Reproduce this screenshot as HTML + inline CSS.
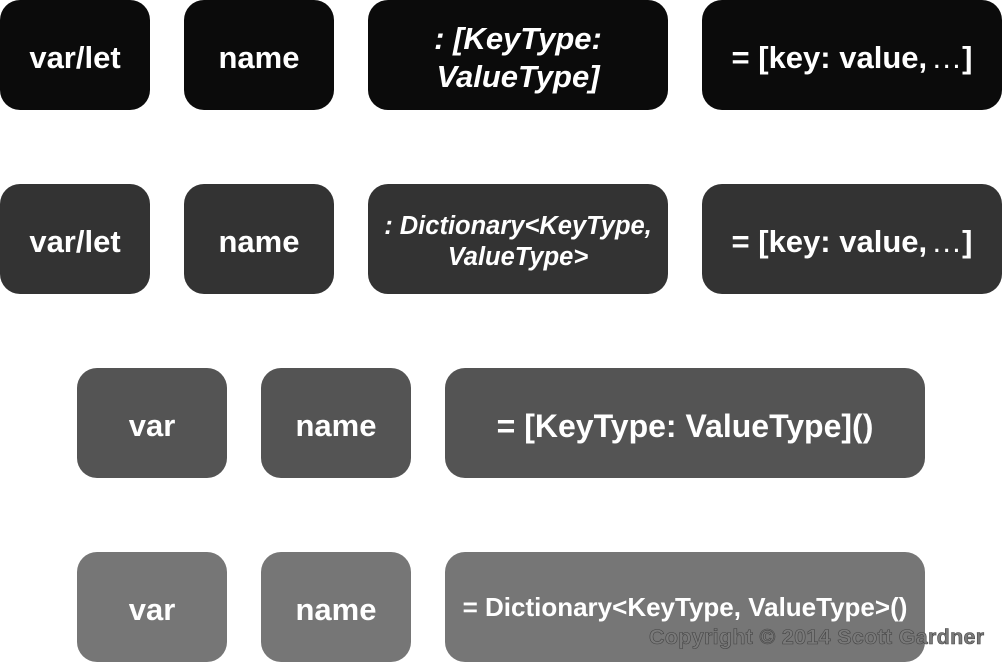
<!DOCTYPE html>
<html><head><meta charset="utf-8"><style>
html,body{margin:0;padding:0;background:#fff;width:1003px;height:663px;overflow:hidden;position:relative;font-family:"Liberation Sans",Arial,sans-serif}
.b{position:absolute;height:110px;box-sizing:border-box;padding-top:6px;border-radius:20px;color:#fff;font-weight:bold;display:flex;align-items:center;justify-content:center;text-align:center;font-size:31px}
.r1{top:0;background:#0b0b0b}.r2{top:184px;background:#333}.r3{top:368px;background:#545454}.r4{top:552px;background:#767676}
i{font-style:italic}
.cp{position:absolute;left:649px;top:625px;font-size:21.5px;font-weight:bold;color:#7a7a7a;-webkit-text-stroke:0.6px #444;letter-spacing:0.3px}
</style></head><body>
<div class="b r1" style="left:0;width:150px">var/let</div>
<div class="b r1" style="left:184px;width:150px">name</div>
<div class="b r1" style="left:368px;width:300px;line-height:38px;font-size:31px"><i>: [KeyType:<br>ValueType]</i></div>
<div class="b r1" style="left:702px;width:300px">= [key: value, <span style="font-weight:normal;margin-left:4px">…</span>]</div>

<div class="b r2" style="left:0;width:150px">var/let</div>
<div class="b r2" style="left:184px;width:150px">name</div>
<div class="b r2" style="left:368px;width:300px;font-size:25.5px;line-height:31px"><i>: Dictionary&lt;KeyType,<br>ValueType&gt;</i></div>
<div class="b r2" style="left:702px;width:300px">= [key: value, <span style="font-weight:normal;margin-left:4px">…</span>]</div>

<div class="b r3" style="left:77px;width:150px">var</div>
<div class="b r3" style="left:261px;width:150px">name</div>
<div class="b r3" style="left:445px;width:480px;font-size:32px">= [KeyType: ValueType]()</div>

<div class="b r4" style="left:77px;width:150px">var</div>
<div class="b r4" style="left:261px;width:150px">name</div>
<div class="b r4" style="left:445px;width:480px;font-size:26px;padding-bottom:6px">= Dictionary&lt;KeyType, ValueType&gt;()</div>
<div class="cp">Copyright © 2014 Scott Gardner</div>
</body></html>
